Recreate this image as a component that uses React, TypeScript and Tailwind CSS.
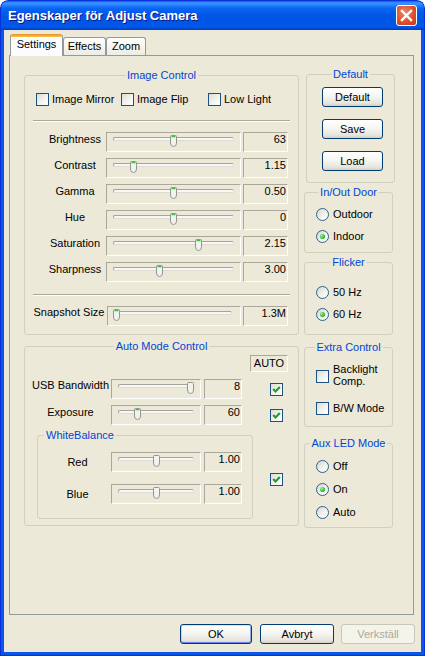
import React from "react";

function CheckBox({ checked = false }: { checked?: boolean }) {
  return (
    <div className="w-[13px] h-[13px] shrink-0 border border-[#1C5180] bg-[linear-gradient(135deg,#DCDCD7_0%,#F3F3EF_55%,#FFFFFF_100%)] flex items-center justify-center">
      {checked && (
        <svg width="11" height="11" viewBox="0 0 11 11">
          <path d="M2.2 5 L4.5 7.4 L8.8 3" fill="none" stroke="#21A121" strokeWidth="2.2" />
        </svg>
      )}
    </div>
  );
}

function Radio({ checked = false }: { checked?: boolean }) {
  return (
    <div className="w-[13px] h-[13px] shrink-0 rounded-full border border-[#2C628B] bg-[linear-gradient(135deg,#D6D6D0_0%,#F4F4F0_60%,#FFFFFF_100%)] flex items-center justify-center">
      {checked && (
        <div className="w-[5px] h-[5px] rounded-full bg-[radial-gradient(circle_at_35%_35%,#A0F0A0_0%,#2FB82F_60%,#1A8F1A_100%)]" />
      )}
    </div>
  );
}

function Thumb({ left, green = true }: { left: number; green?: boolean }) {
  return (
    <svg className="absolute top-[2px]" style={{ left }} width="7" height="12" viewBox="0 0 7 12">
      <path
        d="M0.5 1.5 Q0.5 0.5 1.5 0.5 H5.5 Q6.5 0.5 6.5 1.5 V8 Q6.5 11.5 3.5 11.5 Q0.5 11.5 0.5 8 Z"
        fill="#F2F2EE"
        stroke="#8F9793"
      />
      {green && <path d="M1.5 1.6 H5.5" stroke="#3CC23C" strokeWidth="1.4" />}
    </svg>
  );
}

function Slider({
  box,
  track,
  thumb,
  green = true,
}: {
  box: string;
  track: string;
  thumb: number;
  green?: boolean;
}) {
  return (
    <div className={`relative h-[20px] shrink-0 border border-t-[#ACA899] border-l-[#ACA899] border-b-white border-r-white ${box}`}>
      <div className={`absolute left-[6px] top-[4px] h-[4px] rounded-[2px] border border-t-[#A4A39C] border-l-[#A4A39C] border-b-[#DCDAD2] border-r-[#DCDAD2] bg-[#F8F7F4] ${track}`} />
      <Thumb left={thumb} green={green} />
    </div>
  );
}

function ValueBox({ className, children }: { className: string; children: React.ReactNode }) {
  return (
    <div className={`h-[20px] shrink-0 border border-t-[#ACA899] border-l-[#ACA899] border-b-white border-r-white text-right pr-[1px] ${className}`}>
      {children}
    </div>
  );
}

function Group({
  title,
  className = "",
  leftLegend = false,
  children,
}: {
  title: string;
  className?: string;
  leftLegend?: boolean;
  children?: React.ReactNode;
}) {
  return (
    <div className={`relative shrink-0 border border-[#D0D0BF] rounded-[3px] ${className}`}>
      <span
        className={`absolute top-[-7px] px-[2px] bg-[#ECE9D8] text-[#0046D5] whitespace-nowrap leading-[13px] ${
          leftLegend ? "left-[6px]" : "left-1/2 -translate-x-1/2"
        }`}
      >
        {title}
      </span>
      {children}
    </div>
  );
}

function XPButton({
  className,
  children,
  isDefault = false,
  disabled = false,
}: {
  className: string;
  children: React.ReactNode;
  isDefault?: boolean;
  disabled?: boolean;
}) {
  const base = "h-[20px] shrink-0 rounded-[3px] border flex items-center justify-center";
  const look = disabled
    ? "border-[#C9C7BA] bg-[#F5F4EA] text-[#ACA899]"
    : "border-[#003C74] bg-[linear-gradient(to_bottom,#FFFFFF_0%,#F4F4F0_50%,#E6E4DC_85%,#D6D0C5_100%)]";
  const def = isDefault
    ? "shadow-[inset_0_1px_0_#CEE7FF,inset_0_-1px_0_#6982EE,inset_1px_0_0_#BCD4F6,inset_-1px_0_0_#89ADE4]"
    : "";
  return <div className={`${base} ${look} ${def} ${className}`}>{children}</div>;
}

function IcRow({ label, value, thumb }: { label: string; value: string; thumb: number }) {
  return (
    <div className="flex items-start h-[20px] pl-[19px]">
      <div className="w-[62px] shrink-0 text-center pt-[1px] whitespace-nowrap">{label}</div>
      <Slider box="w-[135px]" track="w-[121px]" thumb={thumb} />
      <ValueBox className="ml-[2px] w-[45px]">{value}</ValueBox>
    </div>
  );
}

function RadioRow({ label, checked = false }: { label: string; checked?: boolean }) {
  return (
    <div className="flex items-center h-[13px] gap-[4px]">
      <Radio checked={checked} />
      <span className="whitespace-nowrap">{label}</span>
    </div>
  );
}

export default function App() {
  return (
    <div className="w-[425px] h-[656px] flex flex-col font-['Liberation_Sans',Arial,sans-serif] text-[11px] leading-[13px] text-black rounded-t-[8px] overflow-hidden">
      {/* Title bar */}
      <div className="h-[30px] shrink-0 flex items-center pl-[7px] pr-[7px] rounded-t-[8px] border-x border-t border-[#0831D9] bg-[linear-gradient(to_bottom,#0A5FE6_0%,#3D95FF_7%,#2B86FF_13%,#0A66F2_25%,#0058E8_45%,#0055E3_70%,#0058EB_88%,#0048D0_96%,#0038B8_100%)]">
        <span className="flex-1 text-white font-bold text-[13px] leading-[15px] whitespace-nowrap [text-shadow:1px_1px_#0A1883]">
          Egenskaper för Adjust Camera
        </span>
        <div className="w-[21px] h-[21px] rounded-[3px] border border-white bg-[radial-gradient(circle_at_40%_35%,#F0876A_0%,#E0502C_55%,#C23A1A_100%)] flex items-center justify-center">
          <svg width="19" height="19" viewBox="0 0 19 19">
            <path d="M5 5 L14 14 M14 5 L5 14" stroke="#FFFFFF" strokeWidth="2.4" strokeLinecap="square" />
          </svg>
        </div>
      </div>

      {/* Body with frame */}
      <div className="flex-1 flex flex-col bg-[#0B55E8] border-x border-b border-[#0831D9] px-[3px] pb-[3px]">
        <div className="flex-1 flex flex-col bg-[#ECE9D8] pt-[4px] pl-[5px] pr-[7px]">
          {/* Tabs */}
          <div className="flex items-end h-[22px] pl-[1px]">
            <div className="relative z-10 w-[53px] h-[22px] shrink-0 flex flex-col border-x border-[#919B9C] rounded-t-[3px] bg-[#FCFCFE] overflow-hidden">
              <div className="h-[3px] shrink-0 bg-[linear-gradient(to_bottom,#E68B2C_0%,#FFC73C_100%)]" />
              <div className="text-center pt-[1px]">Settings</div>
            </div>
            <div className="w-[43px] h-[19px] shrink-0 border border-b-0 border-[#919B9C] rounded-t-[3px] bg-[linear-gradient(to_bottom,#FFFFFF_0%,#F3F2EC_60%,#ECEBE6_100%)] text-center pt-[2px]">
              Effects
            </div>
            <div className="w-[40px] h-[19px] shrink-0 border border-b-0 border-[#919B9C] rounded-t-[3px] bg-[linear-gradient(to_bottom,#FFFFFF_0%,#F3F2EC_60%,#ECEBE6_100%)] text-center pt-[2px]">
              Zoom
            </div>
          </div>

          {/* Panel */}
          <div className="h-[560px] -mt-[1px] shrink-0 border border-[#919B9C] bg-[#ECE9D8] flex pt-[18px] pl-[14px]">
            {/* Left column */}
            <div className="w-[275px] shrink-0 flex flex-col pt-[1px]">
              <Group title="Image Control" className="h-[260px]">
                <div className="flex items-center h-[13px] mt-[17px] pl-[11px]">
                  <div className="w-[85px] shrink-0 flex items-center gap-[3px]">
                    <CheckBox />
                    <span className="whitespace-nowrap">Image Mirror</span>
                  </div>
                  <div className="w-[87px] shrink-0 flex items-center gap-[3px]">
                    <CheckBox />
                    <span className="whitespace-nowrap">Image Flip</span>
                  </div>
                  <div className="flex items-center gap-[3px]">
                    <CheckBox />
                    <span className="whitespace-nowrap">Low Light</span>
                  </div>
                </div>
                <div className="mt-[14px] mx-[8px] h-[2px] border-t border-b border-t-[#ACA899] border-b-white" />
                <div className="mt-[10px] flex flex-col gap-[6px]">
                  <IcRow label="Brightness" value="63" thumb={63} />
                  <IcRow label="Contrast" value="1.15" thumb={23} />
                  <IcRow label="Gamma" value="0.50" thumb={63} />
                  <IcRow label="Hue" value="0" thumb={63} />
                  <IcRow label="Saturation" value="2.15" thumb={88} />
                  <IcRow label="Sharpness" value="3.00" thumb={49} />
                </div>
                <div className="mt-[12px] mx-[8px] h-[2px] border-t border-b border-t-[#ACA899] border-b-white" />
                <div className="mt-[10px] flex items-start h-[20px] pl-[6px]">
                  <div className="w-[76px] shrink-0 text-center whitespace-nowrap">Snapshot Size</div>
                  <Slider box="w-[134px]" track="w-[118px]" thumb={5} />
                  <ValueBox className="ml-[2px] w-[45px]">1.3M</ValueBox>
                </div>
              </Group>

              <Group title="Auto Mode Control" className="h-[180px] mt-[11px]">
                <div className="mt-[8px] ml-[225px] w-[38px] h-[17px] border border-t-[#ACA899] border-l-[#ACA899] border-b-white border-r-white flex items-center justify-center">
                  AUTO
                </div>
                <div className="mt-[7px] flex items-center h-[20px] pl-[5px]">
                  <div className="w-[81px] shrink-0 self-start text-center whitespace-nowrap">USB Bandwidth</div>
                  <Slider box="w-[90px]" track="w-[76px]" thumb={75} green={false} />
                  <ValueBox className="ml-[3px] w-[38px]">8</ValueBox>
                  <div className="ml-[28px]">
                    <CheckBox checked />
                  </div>
                </div>
                <div className="mt-[6px] flex items-center h-[20px] pl-[5px]">
                  <div className="w-[81px] shrink-0 self-start text-center pt-[1px] whitespace-nowrap">Exposure</div>
                  <Slider box="w-[90px]" track="w-[76px]" thumb={22} />
                  <ValueBox className="ml-[3px] w-[38px]">60</ValueBox>
                  <div className="ml-[28px]">
                    <CheckBox checked />
                  </div>
                </div>
                <div className="mt-[10px] flex items-start pl-[12px]">
                  <Group title="WhiteBalance" leftLegend className="w-[216px] h-[84px]">
                    <div className="mt-[16px] flex items-start h-[20px] pl-[6px]">
                      <div className="w-[67px] shrink-0 text-center pt-[4px]">Red</div>
                      <Slider box="w-[90px]" track="w-[76px]" thumb={41} green={false} />
                      <ValueBox className="ml-[3px] w-[38px]">1.00</ValueBox>
                    </div>
                    <div className="mt-[12px] flex items-start h-[20px] pl-[6px]">
                      <div className="w-[67px] shrink-0 text-center pt-[4px]">Blue</div>
                      <Slider box="w-[90px]" track="w-[76px]" thumb={41} green={false} />
                      <ValueBox className="ml-[3px] w-[38px]">1.00</ValueBox>
                    </div>
                  </Group>
                  <div className="ml-[17px] mt-[38px]">
                    <CheckBox checked />
                  </div>
                </div>
              </Group>
            </div>

            {/* Right column */}
            <div className="w-[89px] shrink-0 ml-[5px] flex flex-col">
              <Group title="Default" className="ml-[2px] w-[89px] h-[109px]">
                <div className="mt-[12px] pl-[15px] flex flex-col gap-[12px]">
                  <XPButton className="w-[61px]">Default</XPButton>
                  <XPButton className="w-[61px]">Save</XPButton>
                  <XPButton className="w-[61px]">Load</XPButton>
                </div>
              </Group>
              <Group title="In/Out Door" className="w-[89px] h-[61px] mt-[9px]">
                <div className="mt-[15px] pl-[11px] flex flex-col gap-[9px]">
                  <RadioRow label="Outdoor" />
                  <RadioRow label="Indoor" checked />
                </div>
              </Group>
              <Group title="Flicker" className="w-[89px] h-[73px] mt-[9px]">
                <div className="mt-[23px] pl-[11px] flex flex-col gap-[9px]">
                  <RadioRow label="50 Hz" />
                  <RadioRow label="60 Hz" checked />
                </div>
              </Group>
              <Group title="Extra Control" className="w-[89px] h-[80px] mt-[12px]">
                <div className="mt-[15px] pl-[11px] flex items-start gap-[4px]">
                  <div className="mt-[7px]">
                    <CheckBox />
                  </div>
                  <div className="leading-[12px]">
                    Backlight
                    <br />
                    Comp.
                  </div>
                </div>
                <div className="mt-[15px] pl-[11px] flex items-center h-[13px] gap-[4px]">
                  <CheckBox />
                  <span className="whitespace-nowrap">B/W Mode</span>
                </div>
              </Group>
              <Group title="Aux LED Mode" className="w-[89px] h-[85px] mt-[16px]">
                <div className="mt-[16px] pl-[11px] flex flex-col gap-[10px]">
                  <RadioRow label="Off" />
                  <RadioRow label="On" checked />
                  <RadioRow label="Auto" />
                </div>
              </Group>
            </div>
          </div>

          {/* Buttons */}
          <div className="mt-[9px] -mr-[1px] flex justify-end">
            <XPButton className="w-[72px]" isDefault>
              OK
            </XPButton>
            <XPButton className="w-[74px] ml-[8px]">Avbryt</XPButton>
            <XPButton className="w-[74px] ml-[7px]" disabled>
              Verkställ
            </XPButton>
          </div>
        </div>
      </div>
    </div>
  );
}
